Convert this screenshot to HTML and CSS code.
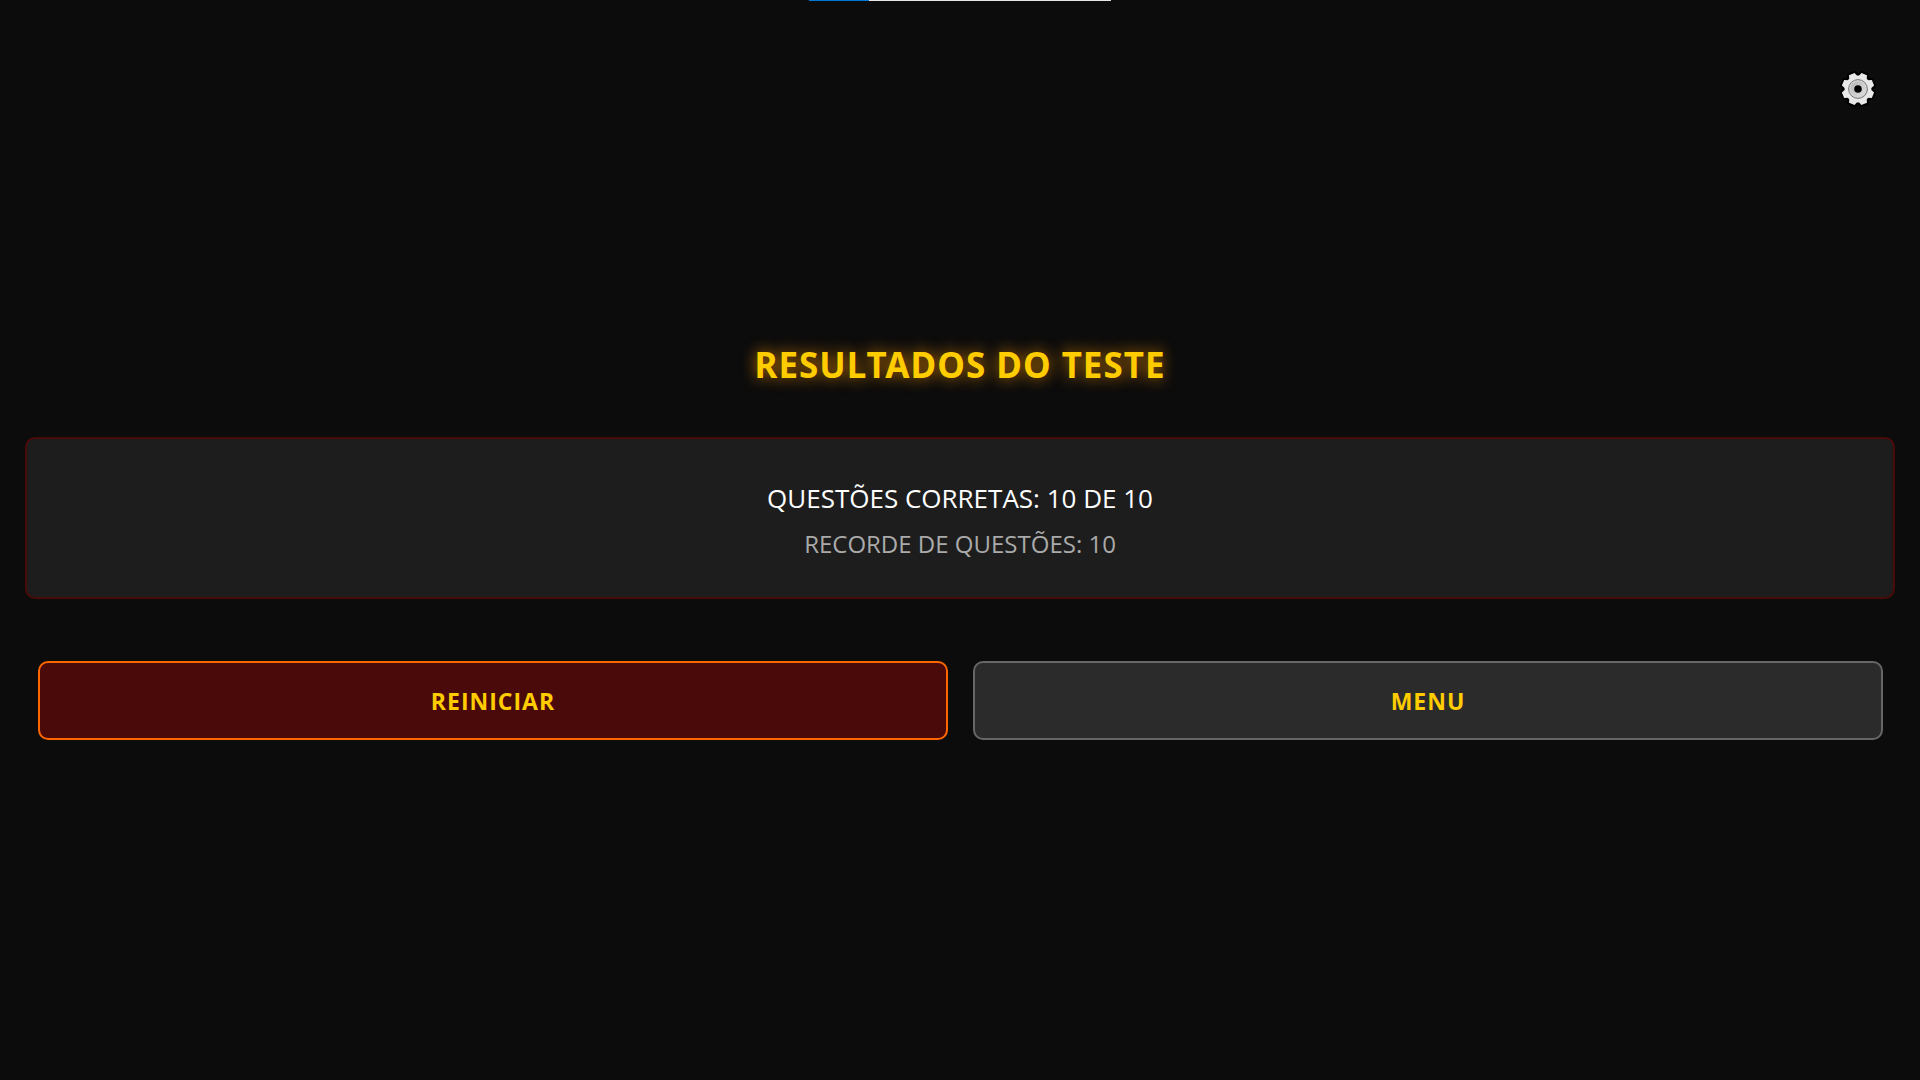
FILE: index.html
```html
<!DOCTYPE html>
<html lang="pt-BR">
<head>
<meta charset="utf-8">
<title>Resultados do teste</title>
<meta name="viewport" content="width=device-width, initial-scale=1">
<link rel="stylesheet" href="styles.css">
</head>
<body>
<div class="top-strip"><span class="top-strip-fill"></span></div>
<button class="settings" type="button" aria-label="Configurações">
  <svg class="settings-icon" viewBox="-20 -20 40 40" aria-hidden="true">
    <defs>
      <g id="teeth">
        <path d="M-4.4-12L-3-16.2H3L4.4-12V12L3 16.2H-3L-4.4 12Z" transform="rotate(22.5)"/>
        <path d="M-4.4-12L-3-16.2H3L4.4-12V12L3 16.2H-3L-4.4 12Z" transform="rotate(67.5)"/>
        <path d="M-4.4-12L-3-16.2H3L4.4-12V12L3 16.2H-3L-4.4 12Z" transform="rotate(112.5)"/>
        <path d="M-4.4-12L-3-16.2H3L4.4-12V12L3 16.2H-3L-4.4 12Z" transform="rotate(157.5)"/>
        <circle r="13.4"/>
      </g>
      <linearGradient id="hub" x1="0" y1="0" x2="1" y2="1">
        <stop offset="0" stop-color="#b4b4b4"/>
        <stop offset="1" stop-color="#e0e0e0"/>
      </linearGradient>
    </defs>
    <use href="#teeth" fill="#000" stroke="#000" stroke-width="4" stroke-linejoin="round"/>
    <use href="#teeth" fill="#e8e8e8"/>
    <circle r="9.4" fill="#d4d4d4" stroke="#777"/>
    <circle r="7.6" fill="url(#hub)"/>
    <circle r="3.8" fill="#000"/>
  </svg>
</button>
<main class="results">
  <h1 class="title">RESULTADOS DO TESTE</h1>
  <section class="card">
    <p class="score">QUESTÕES CORRETAS: 10 DE 10</p>
    <p class="record">RECORDE DE QUESTÕES: 10</p>
  </section>
  <div class="actions">
    <button class="action action-restart" type="button">REINICIAR</button>
    <button class="action action-menu" type="button">MENU</button>
  </div>
</main>
</body>
</html>
```
FILE: styles.css
```css
* { box-sizing: border-box; }

body {
  margin: 0;
  min-height: 100vh;
  display: flex;
  flex-direction: column;
  justify-content: center;
  background: #0c0c0c;
  color: #fff;
  font-family: "Segoe UI", "Open Sans", "Noto Sans", sans-serif;
}

.top-strip {
  position: absolute;
  top: 0;
  left: 50%;
  width: 302px;
  height: 1px;
  transform: translateX(-50%);
  background: #e6e6e6;
}

.top-strip-fill {
  display: block;
  width: 20%;
  height: 100%;
  background: #0078d7;
}

.settings {
  position: absolute;
  top: 69px;
  right: 42px;
  width: 40px;
  height: 40px;
  padding: 0;
  border: 0;
  background: none;
  cursor: pointer;
}

.settings-icon { display: block; }

.results { padding: 0 25px; }

.title {
  margin: 0 0 48px;
  color: #fc0;
  font-family: "Segoe UI", "Noto Sans", sans-serif;
  font-size: 35px;
  line-height: 48px;
  letter-spacing: 1px;
  text-align: center;
  text-shadow: 0 0 15px rgba(255, 153, 0, 0.8);
}

.card {
  padding: 36px 34px 30px;
  border: 2px solid #4a0a0a;
  border-radius: 10px;
  background: #1d1d1d;
  text-align: center;
}

.score,
.record {
  margin: 0;
  line-height: 46px;
}

.score { font-size: 26px; }

.record {
  color: #aaa;
  font-size: 24px;
}

.actions {
  display: grid;
  grid-template-columns: 1fr 1fr;
  gap: 25px;
  margin-top: 62px;
  padding: 0 12px 0 13px;
}

.action {
  padding: 22px 20px 20px;
  border: 2px solid;
  border-radius: 10px;
  color: #fc0;
  font-family: inherit;
  font-size: 23px;
  font-weight: 700;
  line-height: 33px;
  letter-spacing: 1px;
  cursor: pointer;
}

.action-restart {
  border-color: #f60;
  background: #4a0a0a;
}

.action-menu {
  border-color: #666;
  background: #2b2b2b;
}
```
